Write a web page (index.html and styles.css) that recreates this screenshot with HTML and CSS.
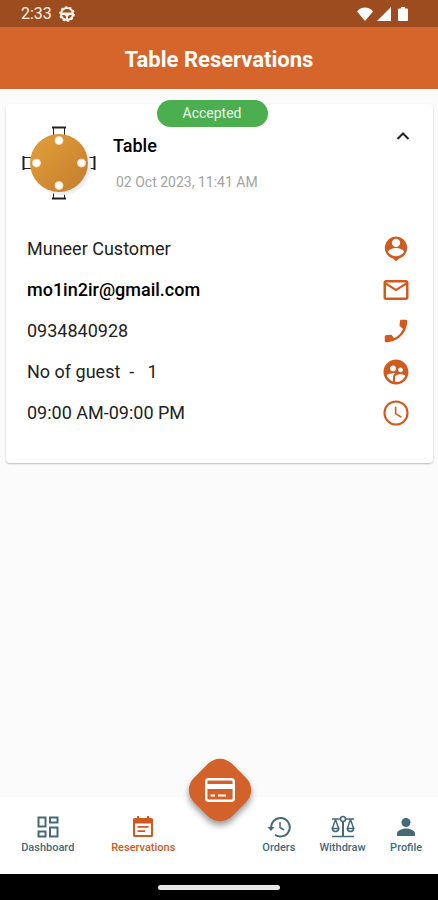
FILE: index.html
```html
<!DOCTYPE html>
<html lang="en">
<head>
  <meta charset="UTF-8">
  <meta name="viewport" content="width=device-width, initial-scale=1.0">
  <title>Table Reservations</title>
  <link rel="stylesheet" href="styles.css">
</head>
<body>

  <div class="status-bar">
    <span class="status-time">2:33</span>
    <svg class="status-wheel" viewBox="0 0 16 16" width="16" height="16">
      <circle cx="8" cy="8" r="6" fill="none" stroke="currentColor" stroke-width="2"/>
      <circle cx="8" cy="8" r="7" fill="none" stroke="currentColor" stroke-width="1.6" stroke-dasharray="2.2 2.2"/>
      <path d="M2 6.5h12v2.2l-4 .5-1 1.4V14H7v-3.4L6 9.200l-4-.5z" fill="currentColor"/>
    </svg>
    <div class="status-icons">
      <svg viewBox="0 0 18 16" width="18" height="16"><path d="M9 15 1 5.500C3 3 6 1.500 9 1.500S15 3 17 5.500z" fill="currentColor"/></svg>
      <svg viewBox="0 0 16 16" width="16" height="16"><path d="M15 1v14H1z" fill="currentColor"/></svg>
      <svg viewBox="0 0 12 16" width="12" height="16"><path d="M4 1h4v1.500h2q1 0 1 1V14q0 1-1 1H2q-1 0-1-1V3.500q0-1 1-1h2z" fill="currentColor"/></svg>
    </div>
  </div>

  <header class="app-bar">
    <h1>Table Reservations</h1>
  </header>

  <main class="content">
    <article class="card">
      <span class="badge">Accepted</span>

      <div class="card-header">
        <svg class="table-picture" viewBox="0 0 76 76" width="76" height="76">
          <defs>
            <linearGradient id="wood" x1="0" y1="0" x2="1" y2="1">
              <stop offset="0" stop-color="#e3a03a"/>
              <stop offset="1" stop-color="#c47c2c"/>
            </linearGradient>
          </defs>
          <g fill="none" stroke="#222" stroke-width="1">
            <path d="M31.500 4v8M42.500 4v8M31.500 66v8M42.500 66v8M2 33.500h8M2 44.500h8M64 33.500h8M64 44.500h8"/>
            <path d="M30 3.500h14M30 74.500h14M1.500 32v14M72.500 32v14" stroke-width="2"/>
          </g>
          <circle cx="40" cy="42" r="29" fill="#eee"/>
          <circle cx="37" cy="39" r="29" fill="url(#wood)"/>
          <g fill="#fff" stroke="#f6dcc0" stroke-width="1">
            <circle cx="37" cy="16.500" r="4"/>
            <circle cx="37" cy="61.500" r="4"/>
            <circle cx="14.500" cy="39" r="4"/>
            <circle cx="59.500" cy="39" r="4"/>
          </g>
        </svg>
        <div class="card-heading">
          <h2>Table</h2>
          <time datetime="2023-10-02T11:41">02 Oct 2023, 11:41 AM</time>
        </div>
        <button class="toggle" type="button" aria-label="Collapse" aria-expanded="true">
          <svg viewBox="0 0 24 24" width="24" height="24"><path d="m6.500 15 5.500-5.500 5.500 5.500" fill="none" stroke="currentColor" stroke-width="2"/></svg>
        </button>
      </div>

      <ul class="details">
        <li>
          <span>Muneer Customer</span>
          <svg viewBox="0 0 24 24" width="30" height="30"><path fill-rule="evenodd" d="M12 2a9 9 0 0 0-2.600 17.600L12 21.800l2.600-2.200A9 9 0 0 0 12 2zm0 1.800a3.300 3.300 0 1 1 0 6.600 3.300 3.300 0 0 1 0-6.600zM5.500 14.200c1-2 4.200-3 6.500-3s5.500 1 6.500 3c-1.300 2.200-3.700 3.500-6.500 3.500s-5.200-1.300-6.500-3.500z"/></svg>
        </li>
        <li>
          <a href="mailto:mo1in2ir@gmail.com">mo1in2ir@gmail.com</a>
          <svg viewBox="0 0 24 24" width="30" height="30"><path d="M20 4H4c-1.100 0-2 .9-2 2v12c0 1.100.9 2 2 2h16c1.100 0 2-.9 2-2V6c0-1.100-.9-2-2-2zm0 14H4V8l8 5 8-5zm-8-7L4 6h16z"/></svg>
        </li>
        <li>
          <span>0934840928</span>
          <svg viewBox="0 0 24 24" width="30" height="30"><path d="m17.700 10.300-2.600-2.100c-.2-.2-.3-.5-.3-.8l.4-3.500c.1-.5.4-.9.9-.9H20c.6 0 1 .4 1 1 0 9.400-7.600 17-17 17-.6 0-1-.4-1-1v-3.800c0-.5.400-.9.900-.9l3.800-.4c.3 0 .6.1.8.3l2 2.500c3.100-1.500 5.700-4.200 7.200-7.400z"/></svg>
        </li>
        <li>
          <span>No of guest&nbsp; -&nbsp;&nbsp; 1</span>
          <svg viewBox="0 0 24 24" width="30" height="30"><path d="M11.990 2c-5.520 0-10 4.480-10 10s4.480 10 10 10 10-4.480 10-10-4.480-10-10-10zm3.610 6.340c1.070 0 1.930.86 1.930 1.930 0 1.070-.86 1.930-1.930 1.930-1.070 0-1.930-.86-1.930-1.930-.01-1.070.86-1.930 1.930-1.930zm-6-1.580c1.300 0 2.360 1.060 2.360 2.360 0 1.300-1.060 2.360-2.360 2.360s-2.360-1.060-2.360-2.360c0-1.310 1.050-2.360 2.360-2.360zm0 9.130v3.750c-2.400-.75-4.300-2.600-5.140-4.960 1.050-1.120 3.670-1.690 5.140-1.690.53 0 1.200.08 1.900.22-1.640.87-1.900 2.020-1.900 2.680zM11.990 20c-.27 0-.53-.01-.79-.04v-4.070c0-1.420 2.940-2.130 4.400-2.130 1.070 0 2.920.39 3.840 1.150-1.170 2.970-4.060 5.090-7.450 5.090z"/></svg>
        </li>
        <li>
          <span>09:00 AM-09:00 PM</span>
          <svg class="line-icon" viewBox="0 0 24 24" width="30" height="30"><circle cx="12" cy="12" r="9.200" stroke-width="1.700"/><path d="M11.700 7v5.500l4.600 2.800" stroke-width="1.300"/></svg>
        </li>
      </ul>
    </article>
  </main>

  <nav class="tab-bar">
    <div class="tabs">
      <a class="tab" href="#dashboard">
        <svg class="line-icon" viewBox="0 0 24 24" width="24" height="24" stroke-width="2"><path d="M2.500 2.500h7v9h-7zM14 2.500h7.500v5H14zM2.500 16.500h7v5h-7zM14 12.500h7.500v9H14z"/></svg>
        Dashboard
      </a>
      <a class="tab active" href="#reservations">
        <svg viewBox="0 0 24 24" width="24" height="24"><path fill-rule="evenodd" d="M6 1h2v2h8V1h2v2h2.500Q22 3 22 4.500v16q0 1.500-1.500 1.500h-17Q2 22 2 20.500v-16Q2 3 3.500 3H6zM4 8.500V20h16V8.500zM6.500 11h11v1.700h-11zm0 4.300h7.500V17H6.500z"/></svg>
        Reservations
      </a>
    </div>
    <a class="fab" href="#payments" aria-label="Payments">
      <svg viewBox="0 0 30 24" width="30" height="24"><rect x="1.200" y="1.200" width="27.600" height="21.600" rx="2.500" fill="none" stroke="#fff" stroke-width="2.400"/><path d="M2 6h26v5H2z" fill="#fff"/><path d="M5.500 17.500h4.500m3 0h8" stroke="#fff" stroke-width="2.200"/></svg>
    </a>
    <div class="tabs">
      <a class="tab" href="#orders">
        <svg class="line-icon" viewBox="0 0 24 24" width="24" height="24"><path d="M4.200 13.500A9.300 9.300 0 1 1 8 19.800" stroke-width="2"/><path d="m.5 12 3.500 4 3.500-4z" fill="currentColor" stroke="none"/><path d="M13 7v5.500l4 2.500" stroke-width="1.500"/></svg>
        Orders
      </a>
      <a class="tab" href="#withdraw">
        <svg class="line-icon" viewBox="0 0 24 24" width="24" height="24" stroke-width="1.500"><path d="M1 4h8.500M14.500 4H23M1 21.500h22M4.500 4.500l-3 8.500M4.500 4.500l3 8.500M19.500 4.500l-3 8.500M19.500 4.500l3 8.500M1.200 13.500h6.600q-.6 3-3.300 3t-3.300-3zM16.200 13.500h6.600q-.6 3-3.300 3t-3.300-3z"/><path d="M12 6.500V21" stroke-width="2"/><circle cx="12" cy="4" r="2.500"/></svg>
        Withdraw
      </a>
      <a class="tab" href="#profile">
        <svg viewBox="0 0 24 24" width="24" height="24"><circle cx="12" cy="7.500" r="4.500"/><path d="M3 21v-2.500c0-3.300 6-5 9-5s9 1.700 9 5V21z"/></svg>
        Profile
      </a>
    </div>
  </nav>

  <div class="system-bar"><span></span></div>

</body>
</html>
```

FILE: styles.css
```css
* {
  box-sizing: border-box;
}
body {
  margin: 0;
  min-height: 100vh;
  display: flex;
  flex-direction: column;
  font-family: Roboto, "Liberation Sans", sans-serif;
  font-size: 18px;
  color: #222;
  background: #fbfbfb;
}
h1, h2, ul {
  margin: 0;
  padding: 0;
}
a {
  color: inherit;
  text-decoration: none;
}
svg {
  display: block;
  flex: none;
  fill: currentColor;
}
.line-icon {
  fill: none;
  stroke: currentColor;
}

.status-bar {
  display: flex;
  align-items: center;
  gap: 7px;
  height: 27px;
  padding: 0 29px 0 21px;
  background: #9c4c1f;
  color: #fff3ea;
}
.status-time {
  font-size: 16px;
}
.status-icons {
  display: flex;
  gap: 2px;
  margin-left: auto;
  color: #fff;
}
.status-icons svg:last-child {
  margin-left: 3px;
}

.app-bar {
  display: flex;
  align-items: center;
  justify-content: center;
  height: 62px;
  padding-top: 2px;
  background: #d5652a;
  color: #fff;
}
.app-bar h1 {
  font-size: 22px;
  font-weight: 700;
}

.content {
  flex: 1;
  padding: 15px 5px 15px 6px;
}
.card {
  position: relative;
  padding: 20px 22px 30px 16px;
  background: #fff;
  border-radius: 4px;
  box-shadow: 0 1px 2px rgba(0, 0, 0, 0.25);
}
/* hangs over the top edge of the card */
.badge {
  position: absolute;
  top: -4px;
  left: calc(50% - 63px);
  width: 111px;
  border-radius: 14px;
  background: #4bae4f;
  color: #e9f8e9;
  font-size: 14px;
  line-height: 27px;
  text-align: center;
}
.card-header {
  display: flex;
  align-items: flex-start;
}
.card-heading {
  flex: 1;
  padding: 11px 0 0 15px;
}
.card-heading h2 {
  font-size: 18px;
  font-weight: 500;
  line-height: 22px;
  color: #000;
}
.card-heading time {
  display: block;
  margin-top: 16px;
  padding-left: 3px;
  font-size: 14px;
  line-height: 18px;
  color: #a3a3a3;
}
.toggle {
  margin-right: -4px;
  padding: 0;
  border: none;
  background: none;
  color: #222;
  cursor: pointer;
}

.details {
  padding: 28px 0 0 5px;
  list-style: none;
}
.details li {
  display: flex;
  align-items: center;
  justify-content: space-between;
  height: 41px;
}
.details svg {
  color: #d15a1e;
}
.details a {
  font-weight: 500;
  color: #000;
}

.tab-bar {
  display: flex;
  height: 77px;
  background: #fff;
}
.tabs {
  flex: 1;
  display: flex;
}
.tab {
  flex: 1;
  display: flex;
  flex-direction: column;
  align-items: center;
  gap: 2px;
  padding-top: 18px;
  font-size: 11px;
  font-weight: 500;
  line-height: 13px;
  color: #46697a;
}
.tab.active {
  color: #d15a1e;
}
.fab {
  flex: none;
  display: flex;
  align-items: center;
  justify-content: center;
  width: 54px;
  height: 54px;
  margin: -34px 0 0 2px;
  border-radius: 17px;
  background: #d2622a;
  box-shadow: 3px 3px 6px rgba(0, 0, 0, 0.4);
  transform: rotate(45deg);
}
.fab svg {
  transform: rotate(-45deg);
}

.system-bar {
  display: flex;
  align-items: center;
  justify-content: center;
  height: 26px;
  background: #000;
}
.system-bar span {
  width: 122px;
  height: 5px;
  border-radius: 3px;
  background: #e8e8e8;
}
```
